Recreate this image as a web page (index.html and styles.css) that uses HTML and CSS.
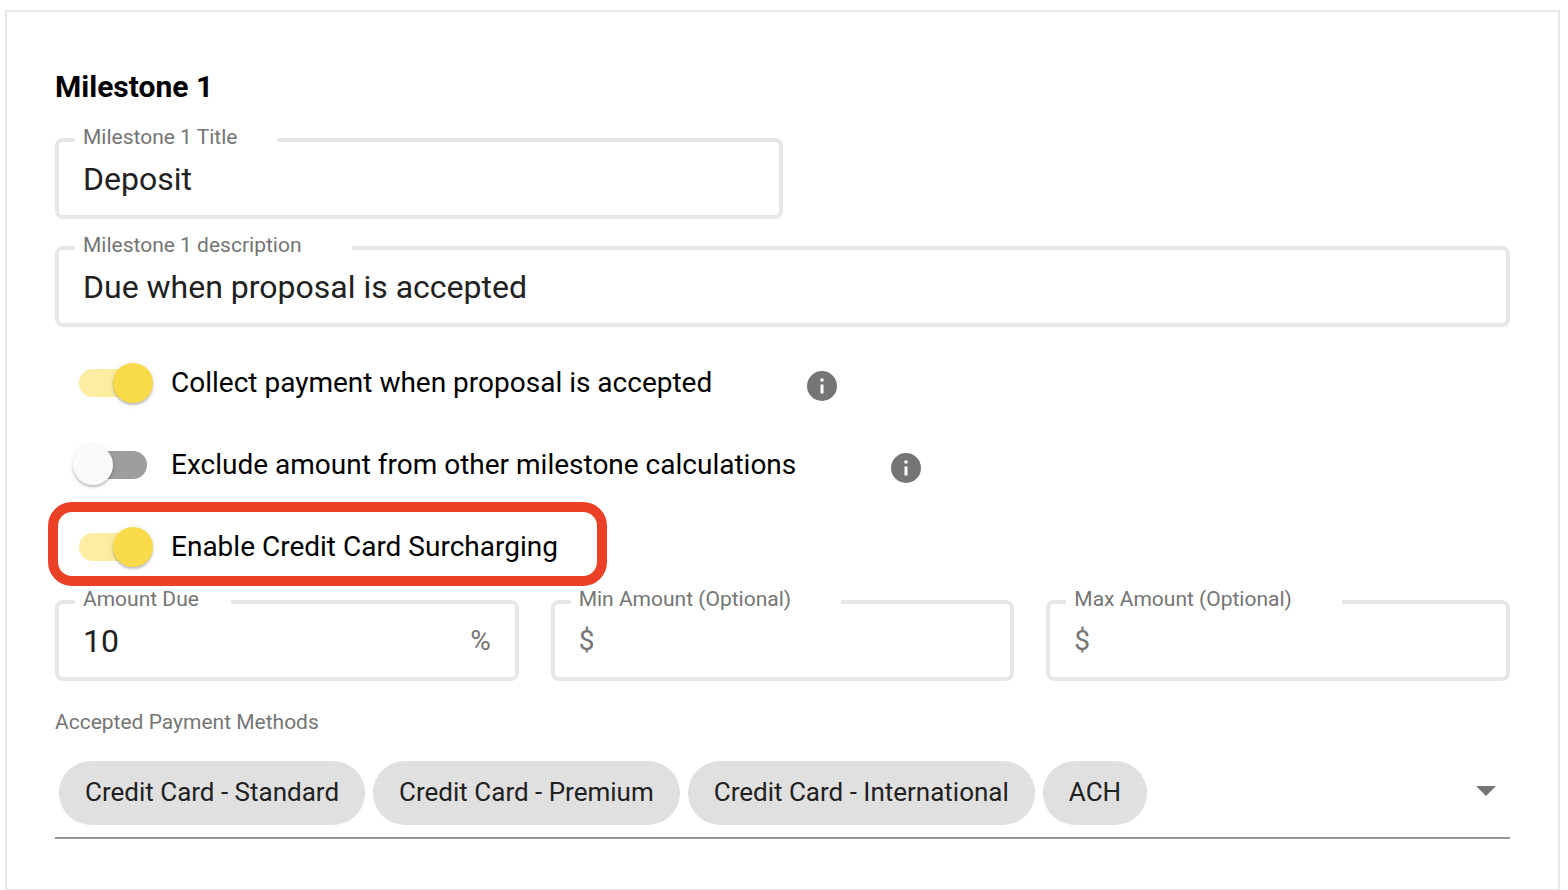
FILE: index.html
```html
<!DOCTYPE html>
<html lang="en">

<head>
    <meta charset="UTF-8">
    <meta name="viewport" content="width=device-width, initial-scale=1.0">
    <title>Milestone 1</title>
    <link rel="stylesheet" href="styles.css">
</head>

<body>
    <form class="card">
        <h2 class="title">Milestone 1</h2>
        <div class="field half">
            <label for="name">Milestone 1 Title</label>
            <input type="text" id="name" value="Deposit">
        </div>
        <div class="field">
            <label class="wide" for="desc">Milestone 1 description</label>
            <input type="text" id="desc" value="Due when proposal is accepted">
        </div>

        <!-- switches -->
        <div class="switches">
            <div class="row">
                <input type="checkbox" class="switch" id="collect" checked>
                <label for="collect">Collect payment when proposal is accepted</label>
                <svg class="info" viewBox="0 0 24 24">
                    <path d="M12 2a10 10 0 1 0 0 20a10 10 0 1 0 0-20zm1 15h-2v-6h2v6zm0-8h-2V7h2v2z" />
                </svg>
            </div>
            <div class="row">
                <input type="checkbox" class="switch" id="exclude">
                <label for="exclude">Exclude amount from other milestone calculations</label>
                <svg class="info" viewBox="0 0 24 24">
                    <path d="M12 2a10 10 0 1 0 0 20a10 10 0 1 0 0-20zm1 15h-2v-6h2v6zm0-8h-2V7h2v2z" />
                </svg>
            </div>
            <div class="row marked">
                <input type="checkbox" class="switch" id="surcharge" checked>
                <label for="surcharge">Enable Credit Card Surcharging</label>
            </div>
        </div>

        <div class="amounts">
            <div class="field">
                <label class="narrow" for="due">Amount Due</label>
                <input type="text" id="due" value="10">
                <span class="unit">%</span>
            </div>
            <div class="field">
                <label class="wide" for="min">Min Amount (Optional)</label>
                <span class="unit">$</span>
                <input type="text" id="min">
            </div>
            <div class="field">
                <label class="wide" for="max">Max Amount (Optional)</label>
                <span class="unit">$</span>
                <input type="text" id="max">
            </div>
        </div>

        <!-- payment methods -->
        <div class="caption" id="methods">Accepted Payment Methods</div>
        <div class="methods">
            <ul class="chips" aria-labelledby="methods">
                <li>Credit Card - Standard</li>
                <li>Credit Card - Premium</li>
                <li>Credit Card - International</li>
                <li>ACH</li>
            </ul>
            <button type="button" class="arrow" aria-labelledby="methods" aria-haspopup="listbox">
                <svg viewBox="0 0 20 10">
                    <path d="M0 0h20L10 10z" />
                </svg>
            </button>
        </div>
    </form>
</body>

</html>
```

FILE: styles.css
```css
* {
    margin: 0;
    padding: 0;
    box-sizing: border-box;
}

body {
    padding: 10px 8px 0 5px;
    background-color: #fff;
    font-family: Roboto, "Liberation Sans", sans-serif;
    color: #000;
}

ul {
    list-style: none;
}

.card {
    padding: 56px 48px 50px;
    border: 2px solid #e7e7e7;
    border-bottom-width: 1px;
}

.title {
    margin-bottom: 32px;
    font-size: 30px;
    line-height: 38px;
    font-weight: bold;
}

/* outlined text fields */
.field {
    position: relative;
    display: flex;
    align-items: center;
    height: 81px;
    padding: 0 24px;
    border: 4px solid #e7e7e7;
    border-radius: 8px;
}

.half {
    width: 50%;
    margin-bottom: 27px;
}

/* the label covers a part of the top border */
.field label {
    position: absolute;
    top: -17px;
    left: 16px;
    padding: 0 40px 0 8px;
    background-color: #fff;
    font-size: 21px;
    line-height: 24px;
    color: #757575;
    white-space: nowrap;
}

.field .wide {
    padding-right: 50px;
}

.field .narrow {
    padding-right: 32px;
}

.field input {
    flex: 1;
    min-width: 0;
    border: none;
    outline: none;
    background: none;
    font-family: inherit;
    font-size: 32px;
    line-height: 40px;
    color: #212121;
}

.unit {
    font-size: 28px;
    line-height: 40px;
    color: #757575;
}

.switches {
    margin: 15px 0 12px;
}

.row {
    display: flex;
    align-items: center;
    height: 82px;
    padding-left: 24px;
    font-size: 28px;
    line-height: 36px;
}

.switch {
    position: relative;
    width: 68px;
    height: 28px;
    margin-right: 24px;
    appearance: none;
    border-radius: 14px;
    background-color: #9e9e9e;
    cursor: pointer;
}

.switch::before {
    content: "";
    position: absolute;
    top: -6px;
    left: -6px;
    width: 40px;
    height: 40px;
    border-radius: 50%;
    background-color: #fafafa;
    box-shadow: 0 2px 2px rgba(0, 0, 0, .2), 0 1px 6px rgba(0, 0, 0, .1);
}

.switch:checked {
    background-color: #fceda3;
}

.switch:checked::before {
    left: 34px;
    background-color: #f9db49;
}

.info {
    width: 36px;
    height: 36px;
    margin: 6px 0 0 92px;
    fill: #757575;
}

.marked {
    position: relative;
    width: fit-content;
}

/* red frame round the row */
.marked::after {
    content: "";
    position: absolute;
    top: -4px;
    right: -49px;
    bottom: 2px;
    left: -7px;
    border: 10px solid #eb4026;
    border-radius: 24px;
    pointer-events: none;
}

.amounts {
    display: grid;
    grid-template-columns: repeat(3, minmax(0, 1fr));
    gap: 32px;
}

.caption {
    margin: 29px 0 27px;
    font-size: 21px;
    line-height: 24px;
    color: #757575;
}

.methods {
    display: flex;
    align-items: center;
    justify-content: space-between;
    padding: 0 14px 12px 4px;
    border-bottom: 2px solid #949494;
}

.chips {
    display: flex;
    flex-wrap: wrap;
    gap: 8px;
}

.chips li {
    padding: 0 26px 2px;
    border-radius: 32px;
    background-color: #e0e0e0;
    font-size: 26px;
    line-height: 62px;
    color: #212121;
}

.arrow {
    padding-bottom: 4px;
    border: none;
    background: none;
    cursor: pointer;
}

.arrow svg {
    display: block;
    width: 20px;
    height: 10px;
    fill: #757575;
}
```
